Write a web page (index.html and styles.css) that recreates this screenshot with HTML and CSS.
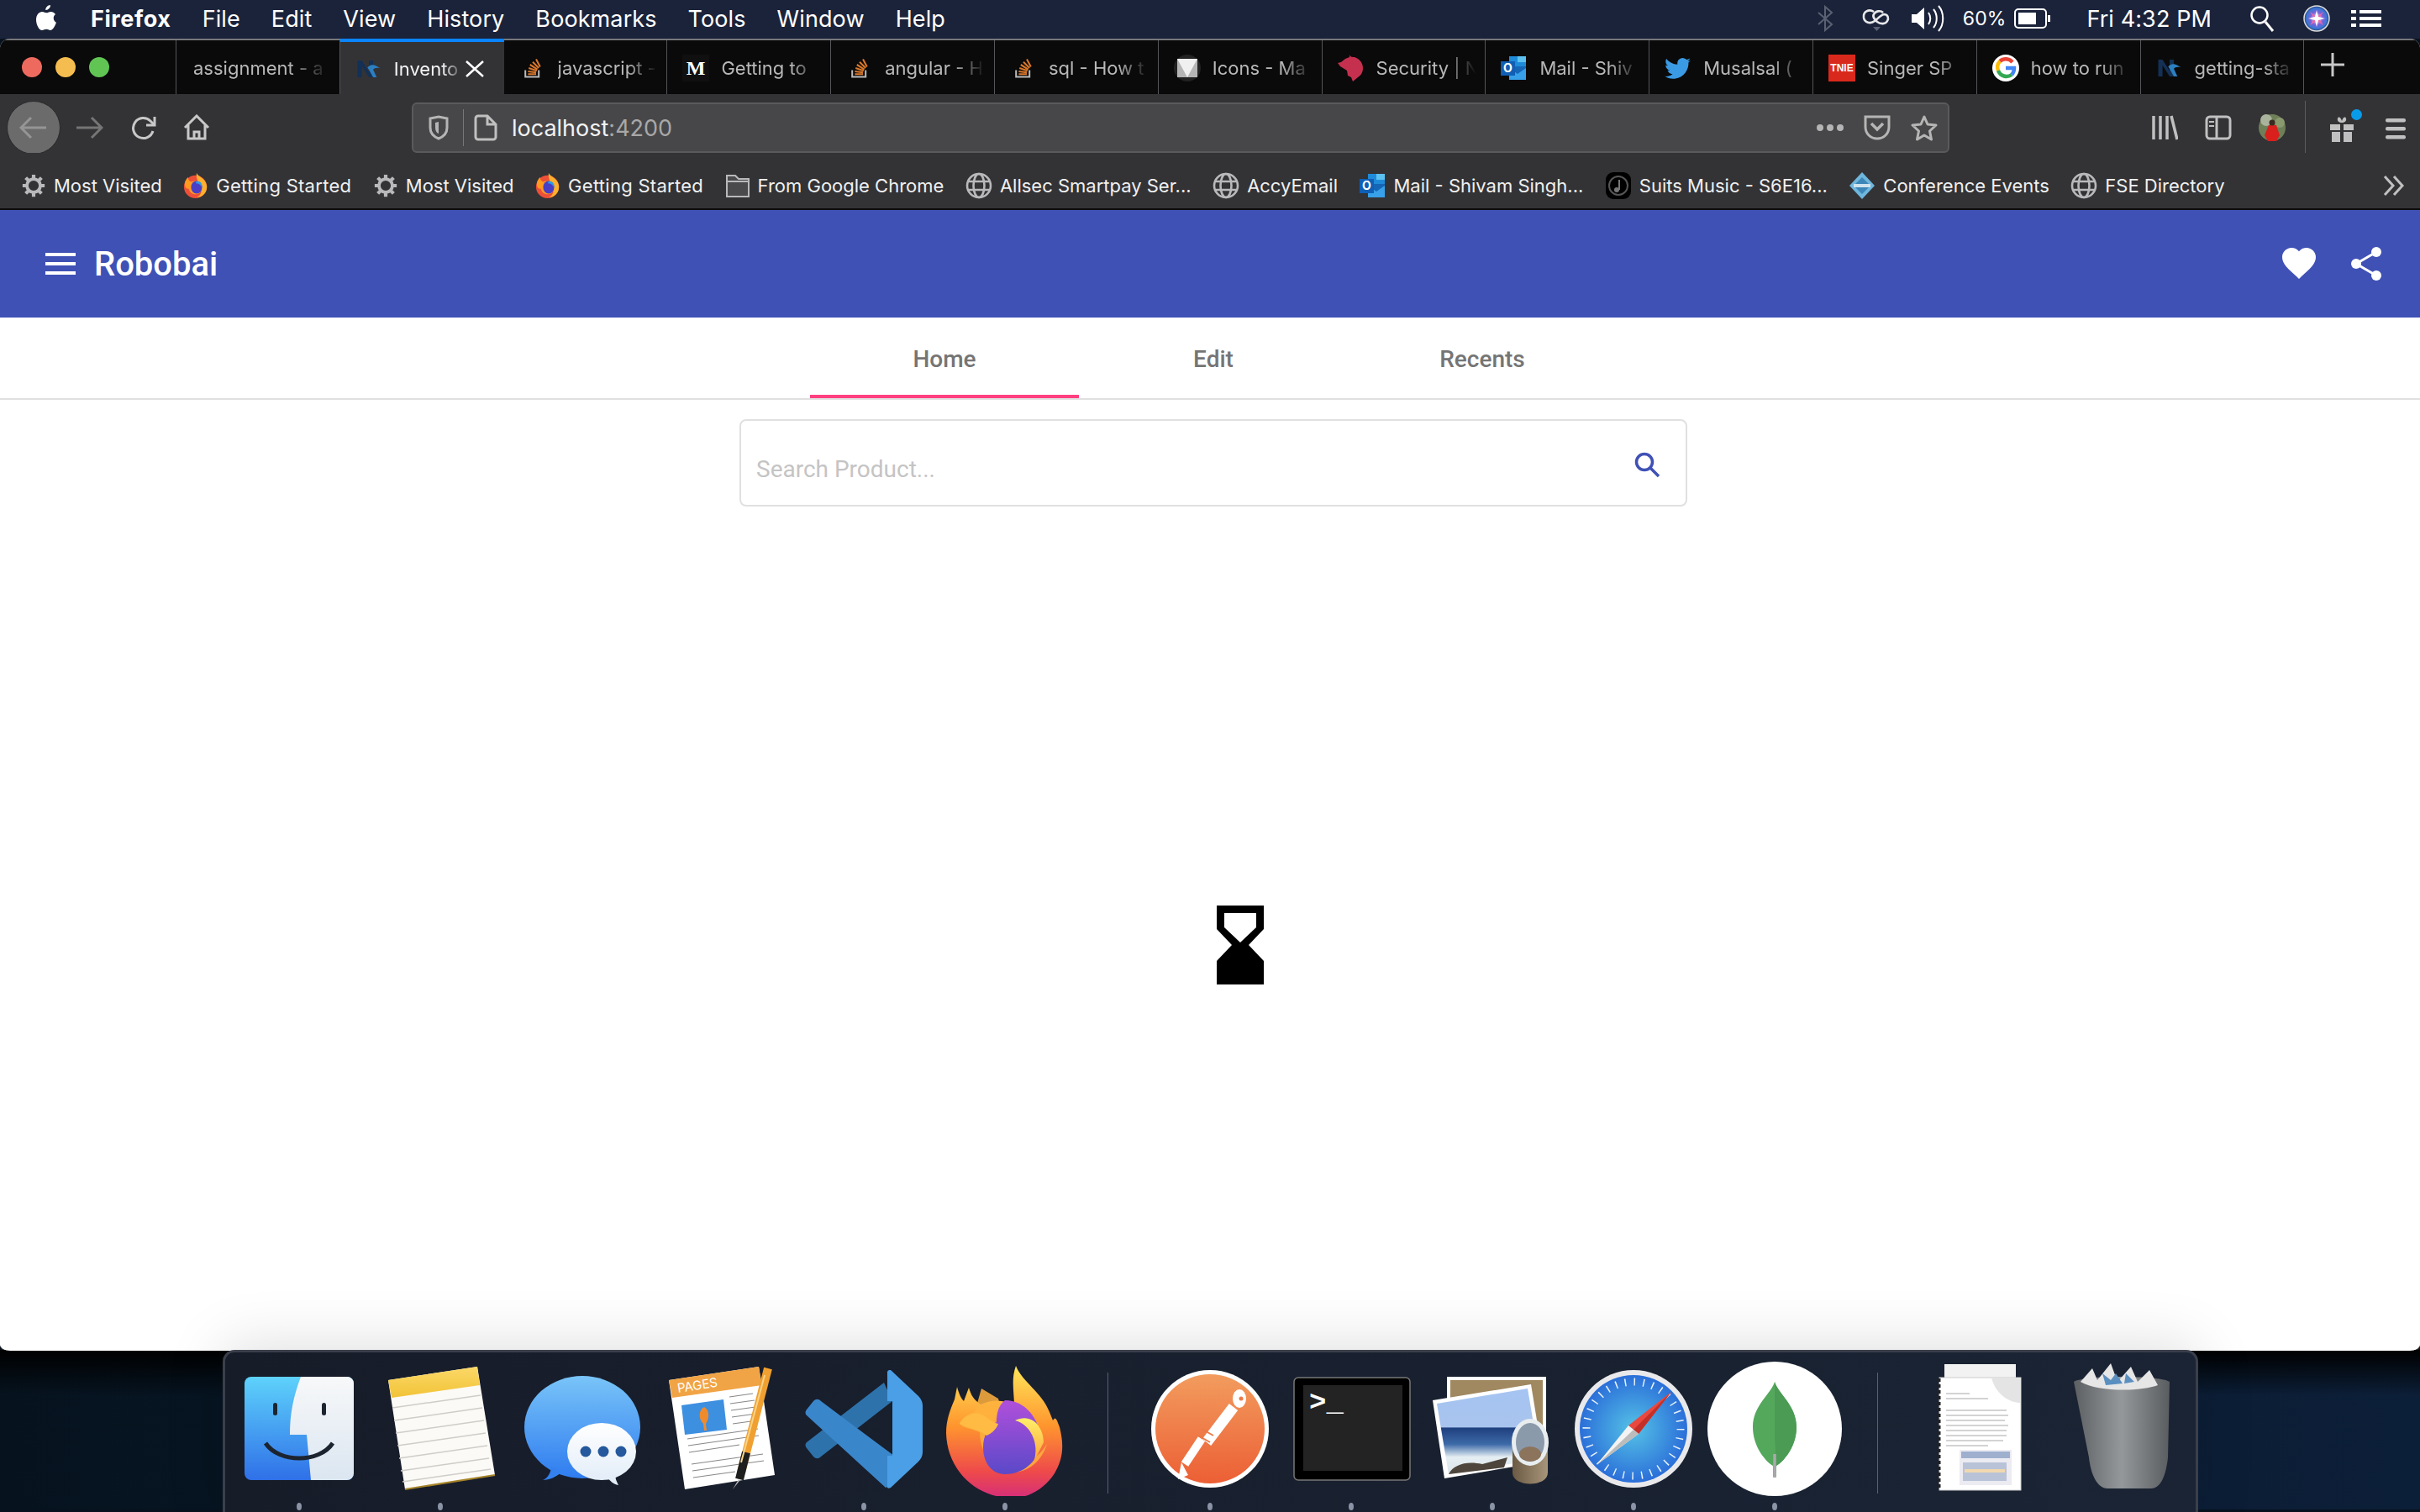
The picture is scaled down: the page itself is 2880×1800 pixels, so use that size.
FILE: index.html
```html
<!DOCTYPE html>
<html lang="en">
<head>
<meta charset="utf-8">
<title>Robobai</title>
<link rel="stylesheet" href="styles.css">
</head>
<body>
<svg class="defs" width="0" height="0">
  <defs>
    <symbol id="so" viewBox="-4 -3 40 38">
      <path d="M5 19v10h20V19" fill="none" stroke="#bcbbbb" stroke-width="2.5"/>
      <path d="M9 25h12M9 21l12 1.5M10 16l12 4M12 11l11 7M16 7l9 9M21 3l6 11" fill="none" stroke="#d9772a" stroke-width="2.6"/>
    </symbol>
    <symbol id="nx" viewBox="0 -3 32 38">
      <path d="M0 28V4h6l10 16V4h6v24h-6L6 12v16z" fill="#143055"/>
      <path d="M14 14c5-5 9-5 18 1-6-1-8 0-10 2l5 11h-5l-5-9z" fill="#2c7fc0"/>
    </symbol>
    <symbol id="globe" viewBox="0 0 32 32">
      <g fill="none" stroke="#b9b9bb" stroke-width="2.6">
        <circle cx="16" cy="16" r="14"/>
        <ellipse cx="16" cy="16" rx="6.5" ry="14"/>
        <path d="M3 11h26M3 21h26"/>
      </g>
    </symbol>
    <symbol id="gear" viewBox="0 0 32 32">
      <circle cx="16" cy="16" r="8.5" fill="none" stroke="#b9b9bb" stroke-width="4"/>
      <path d="M16 2v6M16 24v6M2 16h6M24 16h6M6 6l4.500 4.500M21.500 21.500L26 26M26 6l-4.500 4.500M10.500 21.500L6 26" stroke="#b9b9bb" stroke-width="4.500"/>
    </symbol>
    <symbol id="ffx" viewBox="0 0 32 32">
      <circle cx="15.500" cy="17.500" r="14.500" fill="#ee4f38"/>
      <path d="M17 0c2 5 11 6 13 16 1 8-5 15-13 15 6-3 7-8 5-13C20 12 16 8 17 0z" fill="#ffb02e"/>
      <path d="M2 14c0-4 2-6 4-9 0 3 2 6 5 6 5-2 10 0 12 4 2 5-1 12-7 12-5 0-8-3-9-7-3 0-5-2-5-6z" fill="#ff9a1f"/>
      <ellipse cx="17" cy="18" rx="7" ry="8" fill="#4a3fc4"/>
      <path d="M17 10c5 0 8 4 7 9-1-4-4-6-8-6z" fill="#2f9be8"/>
    </symbol>
    <symbol id="outlook" viewBox="0 0 32 32">
      <rect x="10" y="2" width="20" height="14" fill="#1f8bd8"/>
      <rect x="20" y="2" width="10" height="7" fill="#5cc1f0"/>
      <path d="M10 14h20v16H10z" fill="#1566b7"/>
      <path d="M10 16l10 7 10-7v14H10z" fill="#37a0e8"/>
      <rect x="0" y="8" width="17" height="17" fill="#0f5fb5"/>
      <text class="sym-o" x="8.500" y="21">O</text>
    </symbol>
  </defs>
</svg>

<header class="menubar">
  <svg class="apple" width="26" height="32" viewBox="0 0 26 32"><path d="M18 0c.2 3-2.600 6.200-5.700 6 -.4-3 2.700-6 5.700-6zM24 11c-3 2-3.200 7.500.9 9.800-1.200 3.500-3.800 9.200-7 9.200-1.700 0-2.900-1.200-4.700-1.200S9.800 30 8 30C4.500 30 1 23.500 1 17.500 1 11.700 4.500 8 8.200 8c2.100 0 3.600 1.300 5 1.300 1.300 0 3-1.400 5.500-1.400 1.900 0 3.900.9 5.300 3.100z" fill="#fff"/></svg>
  <b class="menu-app">Firefox</b>
  <span>File</span><span>Edit</span><span>View</span><span>History</span><span>Bookmarks</span><span>Tools</span><span>Window</span><span>Help</span>
  <div class="status">
    <svg width="20" height="32" viewBox="0 0 20 32"><path d="M2 9l16 14-8 7V2l8 7L2 23" fill="none" stroke="#5a6172" stroke-width="2"/></svg>
    <svg width="38" height="32" viewBox="0 0 38 32"><g fill="none" stroke="#e8e8ea" stroke-width="2.600"><path d="M16 8c-6-4-13 0-12 7 1 6 8 8 13 4 4-3 7-7 11-8 5 0 6 5 4 8-2 4-8 4-12 1-3-3-6-6-4-9 2-4 8-5 11-2"/></g><path d="M15 26h9l-4.500 5z" fill="#5a6172"/></svg>
    <svg width="42" height="32" viewBox="0 0 42 32"><path d="M1 11h6l9-8v26l-9-8H1z" fill="#fff"/><path d="M21 9c3 4 3 10 0 14M27 5c5 6 5 16 0 22M33 1c7 8 7 22 0 30" fill="none" stroke="#fff" stroke-width="2"/></svg>
    <span class="pct">60%</span>
    <svg width="44" height="24" viewBox="0 0 44 24"><rect x="1" y="1" width="37" height="22" rx="4" fill="none" stroke="#fff" stroke-width="2"/><rect x="5" y="5" width="21" height="14" fill="#fff"/><rect x="40" y="8" width="3" height="8" fill="#fff"/></svg>
    <span class="clock">Fri 4:32 PM</span>
    <svg width="30" height="32" viewBox="0 0 30 32"><circle cx="12" cy="12" r="9.500" fill="none" stroke="#fff" stroke-width="2.500"/><path d="M19 20l9 11" stroke="#fff" stroke-width="3"/></svg>
    <svg width="32" height="32" viewBox="0 0 32 32"><defs><radialGradient id="siri"><stop offset="0" stop-color="#f5f5ff"/><stop offset=".5" stop-color="#7b5fd8"/><stop offset=".8" stop-color="#3a78d8"/><stop offset="1" stop-color="#263a70"/></radialGradient></defs><circle cx="16" cy="16" r="15" fill="url(#siri)" stroke="#ddd" stroke-width="1.500"/><path d="M8 8l8 6 8-6-5 8 5 8-8-5-8 5 5-8z" fill="#e76aa8"/><path d="M16 6l2 8 8 2-8 2-2 8-2-8-8-2 8-2z" fill="#fff"/></svg>
    <svg width="36" height="20" viewBox="0 0 36 20"><path d="M0 0h6v4H0zM10 0h26v4H10zM0 8h6v4H0zM10 8h26v4H10zM0 16h6v4H0zM10 16h26v4H10z" fill="#fff"/></svg>
  </div>
</header>

<div class="window">
  <div class="tabstrip">
    <div class="lights"><i class="light red"></i><i class="light yellow"></i><i class="light green"></i></div>
    <div class="tab nofav"><span class="tab-title">assignment - a</span></div>
    <div class="tab active"><svg class="fav" width="32" height="32"><use href="#nx"/></svg><span class="tab-title">Invento</span><svg class="close" width="22" height="20" viewBox="0 0 22 20"><path d="M1 1l20 18M21 1L1 19" stroke="#fff" stroke-width="2.500"/></svg></div>
    <div class="tab"><svg class="fav" width="32" height="32"><use href="#so"/></svg><span class="tab-title">javascript -</span></div>
    <div class="tab"><svg class="fav" width="32" height="32" viewBox="0 0 32 32"><rect width="32" height="32" fill="#101010"/><text class="medium-m" x="16" y="24">M</text></svg><span class="tab-title">Getting to</span></div>
    <div class="tab"><svg class="fav" width="32" height="32"><use href="#so"/></svg><span class="tab-title">angular - H</span></div>
    <div class="tab"><svg class="fav" width="32" height="32"><use href="#so"/></svg><span class="tab-title">sql - How t</span></div>
    <div class="tab"><svg class="fav" width="32" height="32" viewBox="0 0 32 32"><circle cx="16" cy="16" r="16" fill="#222"/><path d="M4 5h24v22H4z" fill="#b5b5b5"/><path d="M4 5h24L16 27z" fill="#f0f0f0"/></svg><span class="tab-title">Icons - Ma</span></div>
    <div class="tab"><svg class="fav" width="32" height="32" viewBox="0 0 32 32"><path d="M14 0c1 3 3 3 6 3 6 2 10 7 10 13 0 6-3 9-6 11l-6 5-2-5-4-2-1-6-8-5-3-4 4-1 5-4 5-2z" fill="#c5304f"/></svg><span class="tab-title">Security | N</span></div>
    <div class="tab"><svg class="fav" width="32" height="32"><use href="#outlook"/></svg><span class="tab-title">Mail - Shiv</span></div>
    <div class="tab"><svg class="fav" width="32" height="32" viewBox="0 0 32 32"><path d="M31 7c-1 .6-2.300 1-3.600 1.100 1.300-.8 2.300-2 2.800-3.500-1.200.7-2.600 1.300-4 1.500C25 5 23.300 4 21.500 4c-4 0-7 3.700-6.100 7.700C10 11.400 5.300 8.800 2.200 4.900.5 7.700 1.300 11.400 4.100 13.200c-1 0-2-.3-2.800-.8 0 3 2.100 5.700 5.100 6.300-.9.300-1.900.3-2.800.1.800 2.500 3.100 4.400 5.900 4.400-2.700 2.100-6 3-9.300 2.600C3 27.600 6.400 28.700 10 28.700c12 0 18.900-10.200 18.400-19.300C29.600 8.500 30.500 7.700 31 7z" fill="#3b9ae4"/></svg><span class="tab-title">Musalsal (</span></div>
    <div class="tab"><svg class="fav" width="32" height="32" viewBox="0 0 32 32"><rect width="32" height="32" fill="#d9291c"/><text class="tnie" x="16" y="20">TNIE</text></svg><span class="tab-title">Singer SP</span></div>
    <div class="tab"><svg class="fav" width="32" height="32" viewBox="0 0 32 32"><circle cx="16" cy="16" r="16" fill="#fff"/><g fill="none" stroke-width="4.500"><path d="M24 9a10.500 10.500 0 0 0-15-1" stroke="#ea4335"/><path d="M9 8a10.500 10.500 0 0 0-2 11" stroke="#fbbc05"/><path d="M7 19a10.500 10.500 0 0 0 16 5" stroke="#34a853"/><path d="M23 24c2-2 3-4 3-8H16" stroke="#4285f4"/></g></svg><span class="tab-title">how to run</span></div>
    <div class="tab"><svg class="fav" width="32" height="32"><use href="#nx"/></svg><span class="tab-title">getting-sta</span></div>
    <svg class="newtab" width="28" height="28" viewBox="0 0 28 28"><path d="M14 0v28M0 14h28" stroke="#c8c8c8" stroke-width="3"/></svg>
  </div>

  <div class="toolbar">
    <span class="backbtn"><svg width="34" height="28" viewBox="0 0 34 28"><path d="M14 2L2 14l12 12M2 14h30" fill="none" stroke="#959595" stroke-width="3"/></svg></span>
    <svg class="tb-fwd" width="34" height="28" viewBox="0 0 34 28"><path d="M20 2l12 12-12 12M32 14H2" fill="none" stroke="#757575" stroke-width="3"/></svg>
    <svg class="tb-reload" width="32" height="32" viewBox="0 0 32 32"><path d="M26 20a12 12 0 1 1-3-12l5 5" fill="none" stroke="#c8c8c8" stroke-width="3"/><path d="M28 3v10H18" fill="none" stroke="#c8c8c8" stroke-width="3"/></svg>
    <svg class="tb-home" width="32" height="32" viewBox="0 0 32 32"><path d="M2 16L16 2l14 14M6 13v16h20V13M13 29v-8h6v8" fill="none" stroke="#c8c8c8" stroke-width="3"/></svg>
    <div class="urlbar">
      <svg class="url-shield" width="24" height="30" viewBox="0 0 24 30"><path d="M2 4l10-2 10 2v11c0 7-5 11-10 13C7 26 2 22 2 15z" fill="none" stroke="#b5b5b5" stroke-width="3"/><path d="M12 8v14c-3-1-4-4-4-8V9z" fill="#b5b5b5"/></svg>
      <i class="url-divider"></i>
      <svg class="url-doc" width="28" height="32" viewBox="0 0 28 32"><path d="M5 2h11l10 10v15a3 3 0 0 1-3 3H5a3 3 0 0 1-3-3V5a3 3 0 0 1 3-3zM16 2v10h10" fill="none" stroke="#c0c0c0" stroke-width="3"/></svg>
      <span class="url-text">localhost<span class="url-port">:4200</span></span>
      <svg class="url-dots" width="32" height="8" viewBox="0 0 32 8"><circle cx="4" cy="4" r="4" fill="#b5b5b5"/><circle cx="16" cy="4" r="4" fill="#b5b5b5"/><circle cx="28" cy="4" r="4" fill="#b5b5b5"/></svg>
      <svg class="url-pocket" width="32" height="30" viewBox="0 0 32 30"><path d="M2 2h28v12c0 8-6 14-14 14S2 22 2 14z" fill="none" stroke="#b5b5b5" stroke-width="3"/><path d="M9 10l7 7 7-7" fill="none" stroke="#b5b5b5" stroke-width="3.500"/></svg>
      <svg class="url-star" width="32" height="32" viewBox="0 0 32 32"><path d="M16 3l4 9 10 1-7.500 7 2 10L16 25l-8.500 5 2-10L2 13l10-1z" fill="none" stroke="#b5b5b5" stroke-width="3" stroke-linejoin="round"/></svg>
    </div>
    <svg class="tb-lib" width="32" height="30" viewBox="0 0 32 30"><path d="M3 1v28M11 1v28M19 1v28M24 1l7 28" stroke="#c0c0c0" stroke-width="3.500" fill="none"/></svg>
    <svg class="tb-side" width="32" height="30" viewBox="0 0 32 30"><rect x="2" y="2" width="28" height="26" rx="4" fill="none" stroke="#c0c0c0" stroke-width="3"/><path d="M14 2v26" stroke="#c0c0c0" stroke-width="3"/><path d="M5 8h6M5 13h6" stroke="#c0c0c0" stroke-width="2"/></svg>
    <svg class="tb-avatar" width="32" height="32" viewBox="0 0 32 32"><circle cx="16" cy="16" r="16" fill="#6f7f58"/><circle cx="9" cy="7" r="7" fill="#aab39c"/><circle cx="25" cy="10" r="6" fill="#8a9a6f"/><path d="M7 25l5-12h9l4 12-4 7H11z" fill="#d9201c"/><circle cx="16" cy="10" r="3.500" fill="#3a2a20"/></svg>
    <i class="tb-divider"></i>
    <span class="tb-gift"><svg width="30" height="32" viewBox="0 0 30 32"><path d="M15 8c-3 0-6-2-5-5s4-1 5 3c1-4 4-6 5-3s-2 5-5 5z" fill="#c0c0c0"/><path d="M1 10h12v7H1zM17 10h12v7H17zM3 19h10v12H3zM17 19h10v12H17z" fill="#c0c0c0"/></svg><i class="gift-dot"></i></span>
    <svg class="tb-menu" width="24" height="26" viewBox="0 0 24 26"><rect y="0" width="24" height="4.500" rx="2" fill="#c0c0c0"/><rect y="10" width="24" height="4.500" rx="2" fill="#c0c0c0"/><rect y="20" width="24" height="4.500" rx="2" fill="#c0c0c0"/></svg>
  </div>

  <nav class="bookmarks">
    <a class="bm"><svg width="30" height="30"><use href="#gear"/></svg>Most Visited</a>
    <a class="bm wide"><svg width="30" height="32"><use href="#ffx"/></svg>Getting Started</a>
    <a class="bm"><svg width="30" height="30"><use href="#gear"/></svg>Most Visited</a>
    <a class="bm wide"><svg width="30" height="32"><use href="#ffx"/></svg>Getting Started</a>
    <a class="bm"><svg width="30" height="30" viewBox="0 0 30 30"><path d="M2 28V3h10l4 4h12v21z" fill="#4a4a4c" stroke="#b9b9bb" stroke-width="2"/><path d="M2 10h26" stroke="#b9b9bb" stroke-width="2"/></svg>From Google Chrome</a>
    <a class="bm"><svg width="32" height="32"><use href="#globe"/></svg>Allsec Smartpay Ser...</a>
    <a class="bm"><svg width="32" height="32"><use href="#globe"/></svg>AccyEmail</a>
    <a class="bm"><svg width="32" height="32"><use href="#outlook"/></svg>Mail - Shivam Singh...</a>
    <a class="bm"><svg width="32" height="32" viewBox="0 0 32 32"><rect x="1" y="0" width="30" height="32" rx="9" fill="#000"/><circle cx="16" cy="16" r="11" fill="none" stroke="#555" stroke-width="2"/><path d="M17 9v12" stroke="#777" stroke-width="2"/><circle cx="14" cy="21" r="3" fill="#777"/></svg>Suits Music - S6E16...</a>
    <a class="bm"><svg width="32" height="32" viewBox="0 0 32 32"><path d="M16 0l15 16-15 16L1 16z" fill="#6fb6dc"/><path d="M16 6l10 10-10 10-10-10z" fill="#3c86b8"/><path d="M6 14h20v4H6z" fill="#cfe3ee"/></svg>Conference Events</a>
    <a class="bm"><svg width="32" height="32"><use href="#globe"/></svg>FSE Directory</a>
    <svg class="bm-more" width="26" height="26" viewBox="0 0 26 26"><path d="M2 2l10 11L2 24M13 2l10 11-10 11" fill="none" stroke="#c0c0c0" stroke-width="3"/></svg>
  </nav>

  <main class="app">
    <div class="appbar">
      <svg class="app-menu" width="36" height="26" viewBox="0 0 36 26"><path d="M0 0h36v4H0zM0 11h36v4H0zM0 22h36v4H0z" fill="#fff"/></svg>
      <span class="app-title">Robobai</span>
      <svg class="app-heart" width="40" height="38" viewBox="0 0 40 38"><path d="M20 37L17 34C7 25 0 19 0 11 0 5 5 0 11 0c3.500 0 7 1.600 9 4.200C22 1.600 25.500 0 29 0c6 0 11 5 11 11 0 8-7 14-17 23z" fill="#fff"/></svg>
      <svg class="app-share" width="36" height="40" viewBox="0 0 36 40"><circle cx="30" cy="6" r="6" fill="#fff"/><circle cx="6" cy="20" r="6" fill="#fff"/><circle cx="30" cy="34" r="6" fill="#fff"/><path d="M30 6L6 20l24 14" fill="none" stroke="#fff" stroke-width="3"/></svg>
    </div>
    <div class="tabs">
      <a class="tabitem on">Home</a><a class="tabitem">Edit</a><a class="tabitem">Recents</a>
    </div>
    <div class="search-row">
      <div class="search">
        <span class="placeholder">Search Product...</span>
        <svg class="search-icon" width="32" height="32" viewBox="0 0 32 32"><circle cx="13" cy="13" r="9.500" fill="none" stroke="#3f51b5" stroke-width="3.500"/><path d="M20 20l10 10" stroke="#3f51b5" stroke-width="3.500"/></svg>
      </div>
    </div>
    <svg class="cursor" width="56" height="94" viewBox="0 0 56 94"><path d="M0 0h56v28L38 47l18 19v28H0V66l18-19L0 28z" fill="#000"/><path d="M9 9h38v17L28 44 9 26z" fill="#fff"/></svg>
  </main>
</div>

<div class="desktop">
  <div class="dock">
    <div class="dock-item">
      <svg width="168" height="160" viewBox="0 0 168 160"><defs><linearGradient id="fb" x1="0" y1="0" x2="0" y2="1"><stop offset="0" stop-color="#5ed2fb"/><stop offset="1" stop-color="#2f70e8"/></linearGradient><linearGradient id="fw" x1="0" y1="0" x2="0" y2="1"><stop offset="0" stop-color="#f7f8f9"/><stop offset="1" stop-color="#dbe6f1"/></linearGradient></defs><rect x="19" y="18" width="130" height="123" rx="8" fill="url(#fb)"/><path d="M86 18h55a8 8 0 0 1 8 8v107a8 8 0 0 1-8 8H98l-5-54H73c0-25 4-45 13-69z" fill="url(#fw)"/><rect x="53" y="49" width="5" height="15" rx="2.500" fill="#1c2430"/><rect x="111" y="49" width="5" height="15" rx="2.500" fill="#1c2430"/><path d="M44 97c16 24 64 24 80 0" fill="none" stroke="#1c2430" stroke-width="5"/></svg>
      <i class="dot"></i>
    </div>
    <div class="dock-item">
      <svg width="168" height="160" viewBox="0 0 168 160"><defs><linearGradient id="ny" x1="0" y1="0" x2="0" y2="1"><stop offset="0" stop-color="#fbd868"/><stop offset="1" stop-color="#f2c337"/></linearGradient></defs><path d="M22 22L128 6l21 129-107 17z" fill="#fbfaf6"/><path d="M22 22L128 6l3 22-105 15z" fill="url(#ny)"/><path d="M27 55l105-15M29 70l105-15M31 85l105-15M33 100l105-15M35 115l105-15M37 130l105-15M39 143l105-15" stroke="#cfcdc8" stroke-width="1.500"/><path d="M42 152l107-17" stroke="#a5832a" stroke-width="2"/></svg>
      <i class="dot"></i>
    </div>
    <div class="dock-item">
      <svg width="168" height="160" viewBox="0 0 168 160"><defs><linearGradient id="mb" x1="0" y1="0" x2="0" y2="1"><stop offset="0" stop-color="#79c4f8"/><stop offset="1" stop-color="#2f7cf0"/></linearGradient><linearGradient id="mw" x1="0" y1="0" x2="0" y2="1"><stop offset="0" stop-color="#fff"/><stop offset="1" stop-color="#e3edf8"/></linearGradient></defs><ellipse cx="85" cy="78" rx="69" ry="61" fill="url(#mb)"/><path d="M48 125c0 6-4 14-10 16 8 0 16-4 22-9z" fill="#3380ee"/><ellipse cx="108" cy="107" rx="41" ry="34" fill="url(#mw)"/><path d="M124 134c0 5 2 9 4 13-6-1-10-5-13-9z" fill="#e3edf8"/><circle cx="89" cy="107" r="6.500" fill="#25589c"/><circle cx="110" cy="107" r="6.500" fill="#25589c"/><circle cx="131" cy="107" r="6.500" fill="#25589c"/></svg>
    </div>
    <div class="dock-item">
      <svg width="168" height="160" viewBox="0 0 168 160"><path d="M20 22L127 6l19 129-107 17z" fill="#fff"/><path d="M20 22L127 6l4 22-107 15z" fill="#f1a445"/><text class="pages" transform="translate(31 37) rotate(-9)">PAGES</text><path d="M35 52l50-7 4 36-50 6z" fill="#3d8fe0"/><path d="M62 54c6 3 7 12 2 20l1 8-3 0-1-8c-6-6-6-16 1-20z" fill="#ef8b2c"/><path d="M92 42l28-4M93 50l29-4M94 58l29-4M95 66l29-4M96 74l29-4M42 92l84-12M43 100l84-12M44 108l60-9M47 122l85-12M48 130l85-12M49 138l50-7" stroke="#888" stroke-width="1.200"/><path d="M138 8l-32 124" stroke="#f0a030" stroke-width="10"/><path d="M112 108l-8 32" stroke="#1e1e1e" stroke-width="10"/><path d="M103 140l-7 12 8-10z" fill="#bbb"/><path d="M134 16l-28 104" stroke="#f9d48a" stroke-width="2"/></svg>
    </div>
    <div class="dock-item">
      <svg width="168" height="160" viewBox="0 0 168 160"><path d="M118 47L33 113c-3 3-6 3-9 0l-8-10c-2-3-2-5 0-7L108 25z" fill="#2e72ab"/><path d="M33 47c-3-3-6-3-9 0l-8 10c-2 3-2 5 0 7L110 150l10-4V112z" fill="#3a86cb"/><path d="M116 10l33 31c3 3 5 7 5 11v56c0 4-2 8-5 11l-33 31c-2 1-3 1-4 0V112l6 0V47l-6 0V12c1-2 2-2 4-2z" fill="#4a9fe6"/></svg>
      <i class="dot"></i>
    </div>
    <div class="dock-item">
      <svg width="168" height="160" viewBox="0 0 168 160"><defs><linearGradient id="ff1" x1="0" y1="0" x2="0" y2="1"><stop offset="0" stop-color="#ffe75a"/><stop offset=".45" stop-color="#ff962e"/><stop offset=".8" stop-color="#ee4a4a"/><stop offset="1" stop-color="#d52e7a"/></linearGradient><linearGradient id="ff2" x1="0" y1="0" x2="0" y2="1"><stop offset="0" stop-color="#b14fdb"/><stop offset="1" stop-color="#5a49c8"/></linearGradient><linearGradient id="ff3" x1="0" y1="0" x2="0" y2="1"><stop offset="0" stop-color="#fff06a"/><stop offset="1" stop-color="#ffa23a"/></linearGradient></defs><path d="M14 85c0-16 5-28 10-40l3-15c2 8 5 14 8 17l6-16c3 10 6 14 14 20 18-8 30-4 40 2 0-16-4-32 2-48 8 20 30 30 40 55l4 10c3-5 4-3 8 8 5 20 5 36-6 55-12 19-34 32-58 29-40-4-70-36-71-77z" fill="url(#ff1)"/><path d="M56 32l-8 28c-6 2-16 6-18 14 6 6 14 5 24 10 0 20 12 46 38 48 20 0 36-14 42-34-10 16-22 22-32 22-24-4-34-22-32-42 4-14 10-24 6-34z" fill="#ffb13e" opacity=".85"/><path d="M84 46c24 0 42 22 42 48 0 22-18 40-42 40-16 0-26-14-26-32 0-14 6-24 16-30 0-10 2-20 10-26z" fill="url(#ff2)"/><path d="M96 70c18 4 30 28 22 50l12-24c0-18-14-36-34-26z" fill="url(#ff3)"/><path d="M30 74c6-10 14-14 24-12 8 2 12 10 22 12-2 6-8 12-14 14-10-8-22-8-32-14z" fill="#ffbb44"/></svg>
      <i class="dot"></i>
    </div>
    <i class="dock-sep"></i>
    <div class="dock-item">
      <svg width="168" height="160" viewBox="0 0 168 160"><defs><linearGradient id="pm" x1="0" y1="0" x2="0" y2="1"><stop offset="0" stop-color="#f29c5e"/><stop offset="1" stop-color="#ec5f35"/></linearGradient></defs><circle cx="84" cy="80" r="70" fill="#fff"/><circle cx="84" cy="80" r="65" fill="url(#pm)"/><path d="M112 54L80 96" stroke="#fff" stroke-width="13"/><path d="M74 92L54 122" stroke="#fff" stroke-width="10" fill="none"/><path d="M50 120l-4 20 12-5z" fill="#fff"/><ellipse cx="119" cy="44" rx="8" ry="11" fill="#fff"/><path d="M70 88l14 8M74 80l14 8" stroke="#ec7a47" stroke-width="2"/><circle cx="121" cy="44" r="2.500" fill="#ec7a47"/></svg>
      <i class="dot"></i>
    </div>
    <div class="dock-item">
      <svg width="168" height="160" viewBox="0 0 168 160"><rect x="16" y="19" width="138" height="122" rx="5" fill="#000" stroke="#777" stroke-width="1.500"/><rect x="27" y="28" width="118" height="102" fill="#232323"/><text class="prompt" x="34" y="58">&gt;_</text></svg>
      <i class="dot"></i>
    </div>
    <div class="dock-item">
      <svg width="168" height="160" viewBox="0 0 168 160"><defs><linearGradient id="sky" x1="0" y1="0" x2="0" y2="1"><stop offset="0" stop-color="#a6c4f2"/><stop offset=".45" stop-color="#a8c4ee"/><stop offset=".46" stop-color="#1f3f7e"/><stop offset=".65" stop-color="#3d6aa8"/><stop offset=".8" stop-color="#e5eef2"/><stop offset="1" stop-color="#dbe5ea"/></linearGradient><linearGradient id="lp" x1="0" y1="0" x2="1" y2="0"><stop offset="0" stop-color="#6b5a44"/><stop offset="1" stop-color="#a8957a"/></linearGradient></defs><rect x="30" y="18" width="118" height="70" fill="#fff"/><rect x="34" y="22" width="110" height="66" fill="#a08860"/><path d="M13 46L130 27l15 92-118 20z" fill="#fff"/><path d="M18 50L126 32l14 84-108 18z" fill="url(#sky)"/><path d="M32 134c6-12 22-16 40-12l30-8-4 12-66 8z" fill="#4e463c"/><path d="M108 92h42v40c0 18-42 18-42 0z" fill="url(#lp)"/><ellipse cx="129" cy="96" rx="22" ry="28" fill="#e8edf0"/><ellipse cx="129" cy="96" rx="17" ry="23" fill="#8b9aab"/><ellipse cx="129" cy="110" rx="13" ry="9" fill="#8c735c"/></svg>
      <i class="dot"></i>
    </div>
    <div class="dock-item">
      <svg width="168" height="160" viewBox="0 0 168 160"><defs><radialGradient id="sf"><stop offset="0" stop-color="#55c2e6"/><stop offset="1" stop-color="#2b6fd9"/></radialGradient></defs><circle cx="84" cy="80" r="70" fill="#e9e9ec"/><circle cx="84" cy="80" r="64" fill="url(#sf)"/><circle cx="84" cy="80" r="56" fill="none" stroke="#e6f2fb" stroke-width="9" stroke-dasharray="1.500 9.500"/><path d="M129 36L78 76l12 10z" fill="#e9483f"/><path d="M129 36L90 86l-6-5z" fill="#c42f28"/><path d="M40 123l38-47 12 10z" fill="#f3f3f3"/><path d="M40 123l50-37-6-5z" fill="#bcbcbc"/></svg>
      <i class="dot"></i>
    </div>
    <div class="dock-item">
      <svg width="168" height="160" viewBox="0 0 168 160"><circle cx="84" cy="80" r="80" fill="#fff"/><path d="M84 24c4 14 26 28 26 54 0 22-14 40-24 46v13h-4v-13c-10-6-24-24-24-46 0-26 22-40 26-54z" fill="#54a85c"/><path d="M84 24c4 14 26 28 26 54 0 22-14 40-24 46L84 90z" fill="#4b9b55"/><path d="M84 110v28" stroke="#aaa" stroke-width="3.500"/></svg>
      <i class="dot"></i>
    </div>
    <i class="dock-sep"></i>
    <div class="dock-item">
      <svg width="168" height="160" viewBox="0 0 168 160"><rect x="42" y="3" width="85" height="30" fill="#f2f2f2"/><rect x="36" y="19" width="97" height="134" fill="#fff" stroke="#ccc"/><path d="M36 20v132" stroke="#222" stroke-width="3" stroke-dasharray="4 3"/><path d="M98 19h35v30c-14 0-30-10-35-30z" fill="#e4e4e4"/><path d="M44 38h28M44 44h50M44 58h72M44 64h74M44 70h70M44 76h74M44 82h72M44 88h72M44 94h68M44 100h50" stroke="#a8a8a8" stroke-width="1.200"/><rect x="60" y="105" width="62" height="42" fill="#ecebf2"/><rect x="62" y="107" width="58" height="8" fill="#9fb0cf"/><rect x="64" y="120" width="52" height="22" fill="#b9c3d8"/><rect x="66" y="128" width="48" height="4" fill="#f0d8b0"/></svg>
    </div>
    <div class="dock-item">
      <svg width="168" height="160" viewBox="0 0 168 160"><defs><linearGradient id="tr" x1="0" y1="0" x2="1" y2="0"><stop offset="0" stop-color="#5d6062"/><stop offset=".5" stop-color="#95989a"/><stop offset="1" stop-color="#5a5d60"/></linearGradient></defs><path d="M28 24c10-8 104-8 114 0l-2 90c-2 20-8 37-20 37H68c-12 0-20-17-22-37z" fill="url(#tr)"/><path d="M36 24l14-16 6 14 16-20 8 22 16-18 8 18 14-14 10 18c-22 8-72 8-92-4z" fill="#e6e6e6"/><path d="M62 14l10 8 6-8 8 12-20 2zM90 14l10 10-12 2z" fill="#5a8fc0"/></svg>
    </div>
  </div>
</div>
</body>
</html>
```

FILE: styles.css
```css
* { box-sizing: border-box; }
html, body { margin: 0; padding: 0; }
body {
  width: 2880px;
  height: 1800px;
  overflow: hidden;
  background: #08121f;
  font-family: Inter, "Liberation Sans", sans-serif;
  color: #fff;
}
svg { display: block; flex: none; }
.defs { position: absolute; }
.sym-o { font: 700 14px Inter, sans-serif; fill: #fff; text-anchor: middle; }
.medium-m { font: 700 24px "Liberation Serif", serif; fill: #fff; text-anchor: middle; }
.tnie { font: 700 12px "Liberation Sans", sans-serif; fill: #fff; text-anchor: middle; }
.pages { font: 400 15px Inter, sans-serif; fill: #fff; }
.prompt { font: 700 34px "Liberation Mono", monospace; fill: #fff; }

/* menu bar */
.menubar {
  height: 46px;
  background: #1b233a;
  display: flex;
  align-items: center;
  gap: 37px;
  padding: 0 0 2px 42px;
  font-size: 27px;
  letter-spacing: .1px;
}
.apple { margin-right: 3px; }
.menu-app { font-weight: 700; letter-spacing: .6px; }
.status { margin-left: auto; display: flex; align-items: center; height: 100%; }
.status svg:nth-child(1) { margin-right: 32px; }
.status svg:nth-child(2) { margin-right: 22px; }
.status svg:nth-child(3) { margin-right: 20px; }
.pct { font-size: 23px; margin-right: 10px; }
.clock { font-size: 27px; margin: 0 45px 0 42px; }
.status svg:nth-child(7) { margin-right: 34px; }
.status svg:nth-child(8) { margin-right: 25px; }
.status svg:nth-child(9) { margin-right: 46px; }

/* browser */
.window {
  height: 1566px;
  display: flex;
  flex-direction: column;
  background: #fff;
  border-radius: 12px;
  overflow: hidden;
  border-bottom: 4px solid #2a2a2c;
}
.tabstrip {
  height: 66px;
  background: #0a0a0a;
  border-top: 2px solid #77777a;
  display: flex;
  align-items: stretch;
  flex: none;
}
.lights {
  width: 210px;
  display: flex;
  align-items: center;
  gap: 16px;
  padding-left: 26px;
  border-right: 1px solid #55555a;
}
.light { width: 24px; height: 24px; border-radius: 50%; }
.red { background: #ee6a5f; }
.yellow { background: #f5bd4f; }
.green { background: #61c554; }
.tab {
  width: 194.800px;
  display: flex;
  align-items: center;
  gap: 14px;
  padding: 2px 8px 0 18px;
  border-right: 1px solid #55555a;
  font-size: 22px;
  color: #b8b8b8;
  white-space: nowrap;
}
.tab.nofav { padding-left: 20px; }
.tab.active {
  background: #333336;
  border-right: 0;
  border-top: 4px solid #0a84ff;
  margin-top: -2px;
  padding-right: 24px;
  color: #f4f4f4;
}
.tab-title {
  flex: 1;
  min-width: 0;
  overflow: hidden;
  -webkit-mask-image: linear-gradient(90deg, #000 68%, transparent 98%);
  mask-image: linear-gradient(90deg, #000 68%, transparent 98%);
}
.close { margin-left: -14px; }
.newtab { margin: 15px 0 0 20px; }

.toolbar {
  height: 70px;
  flex: none;
  background: #333336;
  display: flex;
  align-items: center;
  padding-left: 8px;
}
.backbtn {
  width: 64px;
  height: 64px;
  margin-top: 10px;
  border-radius: 50%;
  background: #6b6b6c;
  border: 1px solid #2a2a2c;
  display: flex;
  align-items: center;
  justify-content: center;
}
.tb-fwd { margin: 10px 0 0 17px; }
.tb-reload { margin: 10px 0 0 33px; }
.tb-home { margin: 10px 0 0 30px; }
.urlbar {
  width: 1830px;
  height: 60px;
  margin: 10px 0 0 240px;
  background: #474749;
  border: 2px solid #5a5a5c;
  border-radius: 6px;
  display: flex;
  align-items: center;
  padding-left: 18px;
}
.url-divider { width: 1px; height: 44px; background: #77777a; margin-left: 17px; }
.url-doc { margin-left: 12px; }
.url-text { font-size: 27px; margin-left: 17px; color: #f2f2f2; }
.url-port { color: #a8a8a8; }
.url-dots { margin-left: auto; }
.url-pocket { margin-left: 24px; }
.url-star { margin: 0 12px 0 24px; }
.tb-lib { margin: 10px 0 0 240px; }
.tb-side { margin: 10px 0 0 32px; }
.tb-avatar { margin: 10px 0 0 32px; }
.tb-divider { width: 1px; height: 64px; margin: 10px 0 0 23px; background: #5c5c5e; }
.tb-gift { position: relative; margin: 14px 0 0 28px; }
.gift-dot {
  position: absolute;
  top: -8px;
  right: -9px;
  width: 13px;
  height: 13px;
  border-radius: 50%;
  background: #0a9be8;
}
.tb-menu { margin: 14px 0 0 37px; }

.bookmarks {
  height: 68px;
  flex: none;
  background: #333336;
  border-bottom: 2px solid #0c0c0c;
  display: flex;
  align-items: center;
  gap: 25.500px;
  padding: 12px 0 0 25px;
  font-size: 22px;
  color: #f0f0f0;
}
.bm { display: flex; align-items: center; gap: 9px; white-space: nowrap; }
.bm.wide { letter-spacing: .28px; }
.bm-more { margin-left: auto; margin-right: 18px; }

/* app */
.app { position: relative; flex: 1; background: #fff; font-family: Roboto, sans-serif; }
.appbar {
  height: 128px;
  background: #3f51b5;
  display: flex;
  align-items: center;
  padding-left: 54px;
}
.app-title { font-size: 40px; font-weight: 500; margin-left: 22px; }
.app-heart { margin-left: auto; }
.app-share { margin: 0 46px 0 42px; }
.tabs {
  height: 98px;
  border-bottom: 2px solid #e0e0e0;
  display: flex;
  justify-content: center;
  padding-left: 8px;
}
.tabitem {
  width: 320px;
  height: 96px;
  display: flex;
  align-items: center;
  justify-content: center;
  padding: 2px 0 0;
  font-size: 28px;
  font-weight: 500;
  color: #757575;
}
.tabitem.on { border-bottom: 4px solid #ff4081; padding-bottom: 0; padding-top: 6px; }
.search-row { display: flex; justify-content: center; padding: 23px 0 0 8px; }
.search {
  width: 1128px;
  height: 104px;
  border: 2px solid #e0e0e0;
  border-radius: 8px;
  display: flex;
  align-items: center;
  justify-content: space-between;
  padding: 0 30px 0 18px;
}
.placeholder { font-size: 28px; color: #c4c4c4; margin-top: 14px; }
.search-icon { margin-top: 4px; }
.cursor { position: absolute; left: 1448px; top: 828px; }

/* dock */
.desktop {
  height: 190px;
  padding-left: 265px;
  background:
    linear-gradient(180deg, #000 0, rgba(0, 0, 0, 0) 55px),
    linear-gradient(90deg, #06131f, #0c1f38);
}
.dock {
  position: relative;
  z-index: 1;
  margin-top: -5px;
  width: 2351px;
  height: 200px;
  border: 3px solid #3a3f4b;
  border-bottom: 0;
  border-radius: 14px 14px 0 0;
  background: linear-gradient(90deg, #171c29, #1a2434);
  box-shadow: 0 -6px 70px rgba(0, 0, 0, .13);
  display: flex;
  align-items: flex-start;
  padding: 11px 0 0 4px;
}
.dock-item { width: 168px; flex: none; display: flex; flex-direction: column; align-items: center; }
.dot { width: 6px; height: 9px; border-radius: 50%; margin-top: 8px; background: #8a94a6; }
.dock-sep { width: 1px; height: 144px; margin: 13px 37px 0 38px; background: #59606e; }
```
